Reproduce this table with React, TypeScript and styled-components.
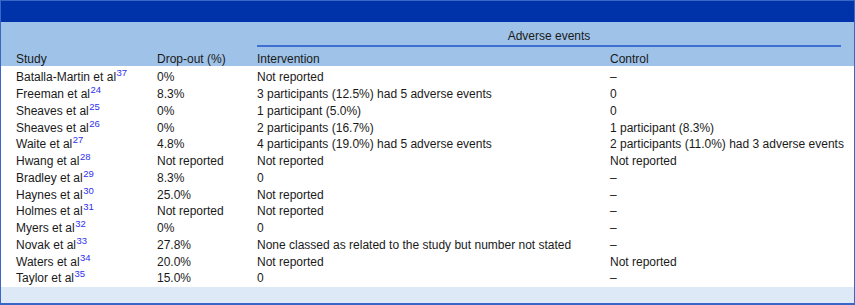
import React from 'react';
import styled, { createGlobalStyle } from 'styled-components';

const GlobalStyle = createGlobalStyle`
  html, body {
    margin: 0;
    padding: 0;
    background: #ffffff;
  }
  body {
    font-family: "Liberation Sans", Arial, sans-serif;
  }
`;

const Frame = styled.div`
  width: 855px;
  height: 305px;
  box-sizing: border-box;
  border: 1px solid #3a66c8;
  border-bottom-width: 2px;
  display: flex;
  flex-direction: column;
  background: #ffffff;
  color: #1a1a1a;
  font-size: 12px;
`;

const TopBar = styled.div`
  height: 21px;
  background: #0033aa;
`;

const Head = styled.div`
  background: #9fc3e8;
  height: 44px;
  display: flex;
  flex-direction: column;
`;

const Row = styled.div<{ $body?: boolean }>`
  display: grid;
  grid-template-columns: 141px 100px 353px 1fr;
  padding-left: 15px;
  height: ${({ $body }) => ($body ? '16.75px' : '16px')};
  align-items: center;
  line-height: 16px;
  white-space: nowrap;
`;

const SpanRow = styled.div`
  display: grid;
  grid-template-columns: 241px 584px 1fr;
  padding-left: 15px;
  padding-top: 6px;
`;

const Spanner = styled.div`
  grid-column: 2;
  text-align: center;
  line-height: 16px;
  padding-bottom: 1px;
  border-bottom: 2px solid #3f6fd0;
`;

const HeadCells = styled(Row)`
  margin-top: 4px;
`;

const Body = styled.div`
  padding-top: 3px;
  flex: 1;
`;

const Foot = styled.div`
  height: 16px;
  background: #dde9f7;
`;

const Ref = styled.sup`
  color: #3030f0;
  font-size: 9.5px;
  line-height: 0;
  vertical-align: 5px;
  margin-left: 0.5px;
`;

type Entry = {
  study: string;
  ref: number;
  dropout: string;
  intervention: string;
  control: string;
};

const rows: Entry[] = [
  { study: 'Batalla-Martin et al', ref: 37, dropout: '0%', intervention: 'Not reported', control: '–' },
  { study: 'Freeman et al', ref: 24, dropout: '8.3%', intervention: '3 participants (12.5%) had 5 adverse events', control: '0' },
  { study: 'Sheaves et al', ref: 25, dropout: '0%', intervention: '1 participant (5.0%)', control: '0' },
  { study: 'Sheaves et al', ref: 26, dropout: '0%', intervention: '2 participants (16.7%)', control: '1 participant (8.3%)' },
  { study: 'Waite et al', ref: 27, dropout: '4.8%', intervention: '4 participants (19.0%) had 5 adverse events', control: '2 participants (11.0%) had 3 adverse events' },
  { study: 'Hwang et al', ref: 28, dropout: 'Not reported', intervention: 'Not reported', control: 'Not reported' },
  { study: 'Bradley et al', ref: 29, dropout: '8.3%', intervention: '0', control: '–' },
  { study: 'Haynes et al', ref: 30, dropout: '25.0%', intervention: 'Not reported', control: '–' },
  { study: 'Holmes et al', ref: 31, dropout: 'Not reported', intervention: 'Not reported', control: '–' },
  { study: 'Myers et al', ref: 32, dropout: '0%', intervention: '0', control: '–' },
  { study: 'Novak et al', ref: 33, dropout: '27.8%', intervention: 'None classed as related to the study but number not stated', control: '–' },
  { study: 'Waters et al', ref: 34, dropout: '20.0%', intervention: 'Not reported', control: 'Not reported' },
  { study: 'Taylor et al', ref: 35, dropout: '15.0%', intervention: '0', control: '–' },
];

export default function App() {
  return (
    <>
      <GlobalStyle />
      <Frame>
        <TopBar />
        <Head>
          <SpanRow>
            <Spanner>Adverse events</Spanner>
          </SpanRow>
          <HeadCells>
            <div>Study</div>
            <div>Drop-out (%)</div>
            <div>Intervention</div>
            <div>Control</div>
          </HeadCells>
        </Head>
        <Body>
          {rows.map((r) => (
            <Row $body key={r.study + r.ref}>
              <div>
                {r.study}
                <Ref>{r.ref}</Ref>
              </div>
              <div>{r.dropout}</div>
              <div>{r.intervention}</div>
              <div>{r.control}</div>
            </Row>
          ))}
        </Body>
        <Foot />
      </Frame>
    </>
  );
}
